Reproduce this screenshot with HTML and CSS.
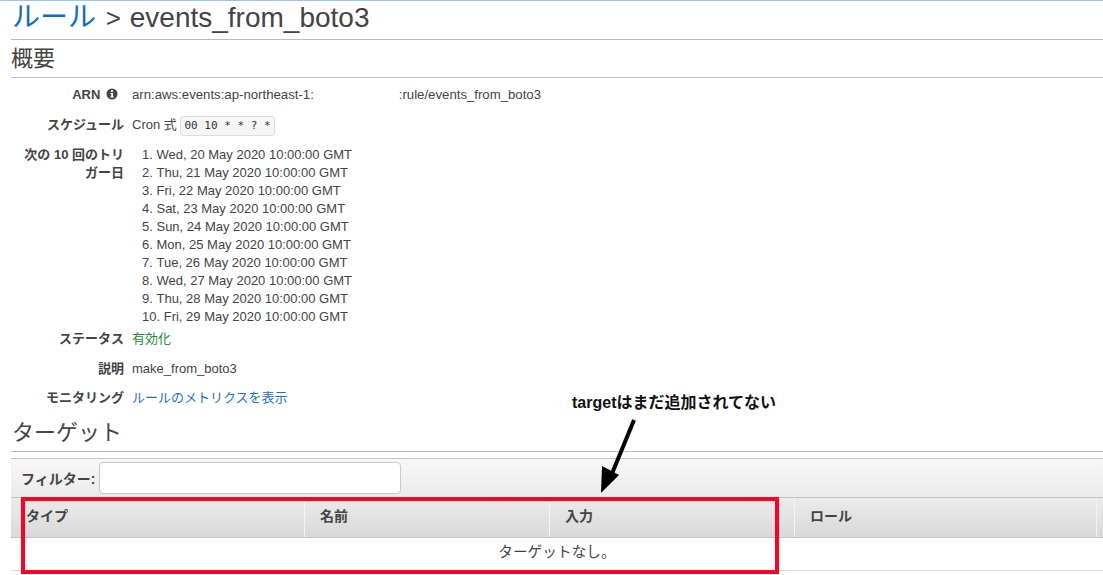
FILE: index.html
```html
<!DOCTYPE html>
<html lang="ja">
<head>
<meta charset="utf-8">
<title>events_from_boto3</title>
<link rel="stylesheet" href="styles.css">
</head>
<body>
<main class="page">
  <h1 class="title"><a href="#" class="crumb">ルール</a> <span class="sep">&gt;</span> events_from_boto3</h1>
  <h2 class="section first">概要</h2>
  <div class="rows">
    <div class="row r-arn">
      <div class="label">ARN <svg class="info" viewBox="0 0 12 12" width="12" height="12"><circle cx="6" cy="6" r="5.5" fill="#444"/><rect x="5" y="2.2" width="2" height="1.8" fill="#fff"/><path d="M4.3 5h2.7v3.6h.9v1H4.3v-1h.9V6h-.9z" fill="#fff"/></svg></div>
      <div class="value arn">arn:aws:events:ap-northeast-1:<span class="redacted"></span>:rule/events_from_boto3</div>
    </div>
    <div class="row r-cron">
      <div class="label">スケジュール</div>
      <div class="value">Cron 式 <code class="cron">00 10 * * ? *</code></div>
    </div>
    <div class="row r-list">
      <div class="label label-wrap">次の 10 回のトリガー日</div>
      <ol class="dates">
        <li>Wed, 20 May 2020 10:00:00 GMT</li>
        <li>Thu, 21 May 2020 10:00:00 GMT</li>
        <li>Fri, 22 May 2020 10:00:00 GMT</li>
        <li>Sat, 23 May 2020 10:00:00 GMT</li>
        <li>Sun, 24 May 2020 10:00:00 GMT</li>
        <li>Mon, 25 May 2020 10:00:00 GMT</li>
        <li>Tue, 26 May 2020 10:00:00 GMT</li>
        <li>Wed, 27 May 2020 10:00:00 GMT</li>
        <li>Thu, 28 May 2020 10:00:00 GMT</li>
        <li>Fri, 29 May 2020 10:00:00 GMT</li>
      </ol>
    </div>
    <div class="row r-status">
      <div class="label">ステータス</div>
      <div class="value ok">有効化</div>
    </div>
    <div class="row r-desc">
      <div class="label">説明</div>
      <div class="value">make_from_boto3</div>
    </div>
    <div class="row r-mon">
      <div class="label">モニタリング</div>
      <div class="value"><a href="#" class="link">ルールのメトリクスを表示</a></div>
    </div>
  </div>
  <h2 class="section second">ターゲット</h2>
  <div class="filter">
    <label class="filter-label">フィルター:</label>
    <input class="filter-input" type="text">
  </div>
  <div class="thead">
    <div class="th">タイプ</div>
    <div class="th">名前</div>
    <div class="th">入力</div>
    <div class="th">ロール</div>
    <div class="th-end"></div>
  </div>
  <div class="empty">ターゲットなし。</div>
</main>
<div class="red-box"></div>
<div class="note">targetはまだ追加されてない</div>
<svg class="arrow" viewBox="0 0 60 90" width="60" height="90">
  <path d="M34 2 L11 58" stroke="#000" stroke-width="4" fill="none"/>
  <path d="M1 75 L2 48 L19 57 Z" fill="#000"/>
</svg>
</body>
</html>
```
FILE: styles.css
```css
* { box-sizing: border-box; }
html, body { margin: 0; padding: 0; }
body {
  width: 1103px;
  height: 575px;
  overflow: hidden;
  background: #fff;
  color: #444;
  font-family: "Liberation Sans", "Noto Sans CJK JP", sans-serif;
  font-size: 13px;
  border-top: 1px solid #9cc4e8;
  position: relative;
}
.page { padding-left: 11px; }
.title {
  margin: 0;
  height: 39px;
  border-bottom: 1px solid #bbb;
  font-size: 28px;
  font-weight: 400;
  line-height: 34px;
  color: #444;
  white-space: nowrap;
  padding-left: 1px;
}
.crumb { color: #0f6cbd; text-decoration: none; }
.sep { font-size: 26px; margin: 0 1px 0 2px; }
.section {
  margin: 0;
  font-size: 22px;
  font-weight: 400;
  color: #444;
  border-bottom: 1px solid #bbb;
  line-height: 30px;
}
.section.first { height: 38px; padding-top: 4px; }
.section.second { height: 45px; padding-top: 11px; padding-left: 1px; }
.rows { padding-top: 8px; }
.row { display: flex; align-items: flex-start; line-height: 18px; }
.label {
  width: 113px;
  text-align: right;
  font-weight: 700;
  color: #444;
  flex: none;
}
.label-wrap { padding-left: 12px; }
.value { margin-left: 8px; white-space: nowrap; }
.arn { font-size: 13.2px; }
.info { vertical-align: -1px; margin: 0 6px 0 2px; }
.redacted { display: inline-block; width: 85px; }
.r-arn { height: 30px; }
.r-cron { height: 30px; }
.r-list { height: 184px; }
.r-status { height: 30px; }
.r-desc { height: 29px; }
.r-mon { height: 18px; }
.cron {
  display: inline-block;
  font-family: "DejaVu Sans Mono", "Liberation Mono", monospace;
  font-size: 11px;
  line-height: 16px;
  height: 20px;
  padding: 1px 3px;
  background: #f5f5f5;
  border: 1px solid #ddd;
  border-radius: 3px;
  color: #333;
  vertical-align: 0;
}
.dates {
  margin: 0 0 0 18px;
  padding: 0;
  white-space: nowrap;
  list-style-position: inside;
}
.dates li { height: 18px; }
.ok { color: #1d8a3c; }
.link { color: #1a72bb; text-decoration: none; }
.filter {
  margin-top: 6px;
  height: 39px;
  border-top: 1px solid #c4c4c4;
  background: linear-gradient(#f7f7f7, #ebebeb);
  display: flex;
  align-items: center;
  padding-left: 10px;
  gap: 4px;
}
.filter-label { font-weight: 700; font-size: 14px; color: #444; }
.filter-input {
  width: 302px;
  height: 32px;
  margin: 0;
  border: 1px solid #c8c8c8;
  border-radius: 4px;
  background: #fff;
}
.thead {
  display: grid;
  grid-template-columns: 294px 245px 245px 302px 1fr;
  height: 41px;
  border-top: 1px solid #c4c4c4;
  border-bottom: 1px solid #c4c4c4;
  background: linear-gradient(#ebebeb, #d9d9d9);
}
.th {
  font-weight: 700;
  font-size: 14px;
  line-height: 37px;
  color: #444;
  border-right: 1px solid #f4f4f4;
  padding-left: 15px;
}
.empty {
  height: 33px;
  border-bottom: 1px solid #ddd;
  text-align: center;
  line-height: 29px;
  width: 1092px;
  font-size: 14.7px;
}
.red-box {
  position: absolute;
  left: 21px;
  top: 496px;
  width: 758px;
  height: 77px;
  border: 4px solid #ff0022;
}
.note {
  position: absolute;
  left: 572px;
  top: 393px;
  font-size: 16px;
  font-weight: 700;
  line-height: 18px;
  color: #111;
  white-space: nowrap;
}
.arrow { position: absolute; left: 600px; top: 417px; }
```
